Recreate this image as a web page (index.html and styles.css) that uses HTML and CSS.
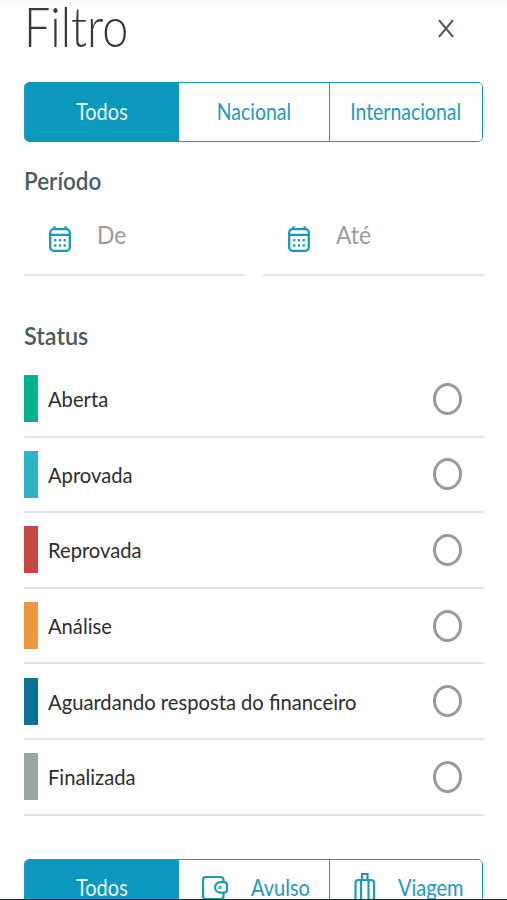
FILE: index.html
```html
<!DOCTYPE html>
<html lang="pt-BR">
<head>
    <meta charset="UTF-8">
    <meta name="viewport" content="width=device-width, initial-scale=1.0">
    <title>Filtro</title>
    <link rel="stylesheet" href="styles.css">
</head>
<body>

    <svg class="sprite" width="0" height="0">
        <symbol id="calendar" viewBox="0 0 22 28">
            <rect x="1.2" y="4.2" width="19.6" height="21.6" rx="3.4" fill="none" stroke="currentColor" stroke-width="2.3"/>
            <path d="M1 9.8h20M5.4 1.2v3.5M16.6 1.2v3.5" fill="none" stroke="currentColor" stroke-width="2.3"/>
            <path d="M5.2 15.2h2.2M9.9 15.2h2.2M14.6 15.2h2.2M5.2 20.5h2.2M9.9 20.5h2.2M14.6 20.5h2.2" stroke="currentColor" stroke-width="2.5"/>
        </symbol>
    </svg>

    <main class="filter">
        <header class="filter-header">
            <h1><span class="txt title-txt">Filtro</span></h1>
            <button class="close-btn" type="button" aria-label="Fechar">
                <svg width="16" height="19" viewBox="0 0 16 19"><path d="M1 1.2l14 16.6M15 1.2L1 17.8" fill="none" stroke="currentColor" stroke-width="2"/></svg>
            </button>
        </header>

        <div class="tabs">
            <button class="tab active" type="button"><span class="txt">Todos</span></button>
            <button class="tab" type="button"><span class="txt">Nacional</span></button>
            <button class="tab" type="button"><span class="txt">Internacional</span></button>
        </div>

        <h2 class="period-title"><span class="txt">Período</span></h2>
        <div class="period">
            <label class="date-field">
                <svg class="calendar" width="22" height="28"><use href="#calendar"/></svg>
                <span class="txt">De</span>
            </label>
            <label class="date-field">
                <svg class="calendar" width="22" height="28"><use href="#calendar"/></svg>
                <span class="txt">Até</span>
            </label>
        </div>

        <h2 class="status-title"><span class="txt">Status</span></h2>
        <ul class="status-list">
            <li><i class="bar open"></i><span class="txt">Aberta</span><i class="radio"></i></li>
            <li><i class="bar approved"></i><span class="txt">Aprovada</span><i class="radio"></i></li>
            <li><i class="bar rejected"></i><span class="txt">Reprovada</span><i class="radio"></i></li>
            <li><i class="bar analysis"></i><span class="txt">Análise</span><i class="radio"></i></li>
            <li><i class="bar waiting"></i><span class="txt">Aguardando resposta do financeiro</span><i class="radio"></i></li>
            <li><i class="bar done"></i><span class="txt">Finalizada</span><i class="radio"></i></li>
        </ul>

        <div class="tabs type-tabs">
            <button class="tab active" type="button"><span class="txt">Todos</span></button>
            <button class="tab with-icon single" type="button">
                <svg width="28" height="28" viewBox="0 0 28 28" fill="none" stroke="currentColor" stroke-width="2.2">
                    <path d="M22.5 8.500V7Q22.500 4 19.500 4H4.500Q2 4 2 7v16q0 3 3 3h14.500q3 0 3-3v-3"/>
                    <path d="M23 9.200h-3.700a5 5 0 0 0 0 10.400H23q3 0 3-2.600v-5.200q0-2.600-3-2.600z"/>
                    <circle cx="19" cy="14.400" r=".6"/>
                </svg>
                <span class="txt">Avulso</span>
            </button>
            <button class="tab with-icon trip" type="button">
                <svg width="22" height="32" viewBox="0 0 22 32" fill="none" stroke="currentColor" stroke-width="2.2">
                    <rect x="1.500" y="9" width="18.500" height="22" rx="3"/>
                    <path d="M7 9v22M14.500 9v22M8 9V3h5.500v6"/>
                </svg>
                <span class="txt">Viagem</span>
            </button>
        </div>
    </main>

</body>
</html>
```
FILE: styles.css
```css
* {
    box-sizing: border-box;
}

body {
    font-family: Lato, "Open Sans", sans-serif;
    margin: 0;
    height: 900px;
    overflow: hidden;
    background: #fff;
    border-top: 4px solid #fafafa;
    border-bottom: 1px solid #20282c;
}

.sprite {
    display: block;
}

.filter {
    height: 895px;
    padding: 0 23px 0 24px;
    overflow: hidden;
}

h1, h2, ul {
    margin: 0;
    padding: 0;
}

/* condensed lettering */
.txt {
    display: inline-block;
    white-space: nowrap;
    transform: scaleX(0.917);
    transform-origin: left center;
}

.filter-header {
    display: flex;
    justify-content: space-between;
    height: 78px;
    padding-right: 30px;
}

.filter-header h1 {
    font-size: 55px;
    font-weight: 300;
    line-height: 44px;
    color: #36393a;
}

.title-txt {
    transform: scaleX(0.85);
}

.close-btn {
    align-self: flex-start;
    margin-top: 15px;
    padding: 0;
    border: none;
    background: none;
    color: #46545a;
    line-height: 0;
}

.tabs {
    display: grid;
    grid-template-columns: 154px 151px 1fr;
    height: 60px;
    margin-right: 1px;
    border: 1px solid #1c9abd;
    border-radius: 5px;
    overflow: hidden;
}

.tab {
    display: flex;
    justify-content: center;
    align-items: center;
    padding: 0 0 3px;
    border: none;
    border-right: 1px solid #1c9abd;
    background: #fff;
    color: #1c9abd;
    font-family: inherit;
    font-size: 23px;
}

.tab .txt {
    transform: scaleX(0.845);
    transform-origin: center;
}

.tab:last-child {
    border-right: none;
}

.tab.active {
    background: #0d99be;
    color: #e8f8fc;
}

.tab.active .txt {
    transform: scaleX(0.87);
}

h2 {
    font-size: 24px;
    font-weight: 600;
    line-height: 30px;
    color: #4b5c60;
}

.period-title {
    margin-top: 24px;
}

.period-title .txt {
    transform: scaleX(0.937);
}

.period {
    display: grid;
    grid-template-columns: 1fr 1fr;
    gap: 18px;
    height: 80px;
}

.date-field {
    display: flex;
    align-items: center;
    padding: 0 0 2px 25px;
    border-bottom: 2px solid #e3e3e3;
    color: #9b9b9b;
    font-size: 25px;
}

.calendar {
    margin-top: 9px;
    margin-right: 26px;
    color: #1799ba;
}

.status-title {
    margin-top: 45px;
}

.status-title .txt {
    transform: scaleX(0.975);
}

.status-list {
    list-style: none;
    margin-top: 11px;
}

.status-list li {
    display: flex;
    align-items: center;
    height: 75.6px;
    border-bottom: 2px solid #e3e3e3;
    font-size: 22px;
    color: #2d2d2d;
}

.bar {
    width: 14px;
    height: 47px;
    margin-right: 9.5px;
}

.open { background: #00b38c; }
.approved { background: #2ab4c5; }
.rejected { background: #c5473f; }
.analysis { background: #ea9a3d; }
.waiting { background: #0b719b; }
.done { background: #9ba5a5; }

.radio {
    width: 29px;
    height: 32px;
    margin-left: auto;
    margin-right: 22px;
    border: 3px solid #9a9a9a;
    border-radius: 50%;
}

.type-tabs {
    margin-top: 43px;
}

.with-icon {
    justify-content: flex-start;
}

.with-icon .txt {
    transform: scaleX(0.87);
    transform-origin: left center;
}

.single {
    padding-left: 22px;
}

.single svg {
    margin-right: 22px;
}

.trip {
    padding-left: 24px;
}

.trip svg {
    margin-right: 22px;
}
```
